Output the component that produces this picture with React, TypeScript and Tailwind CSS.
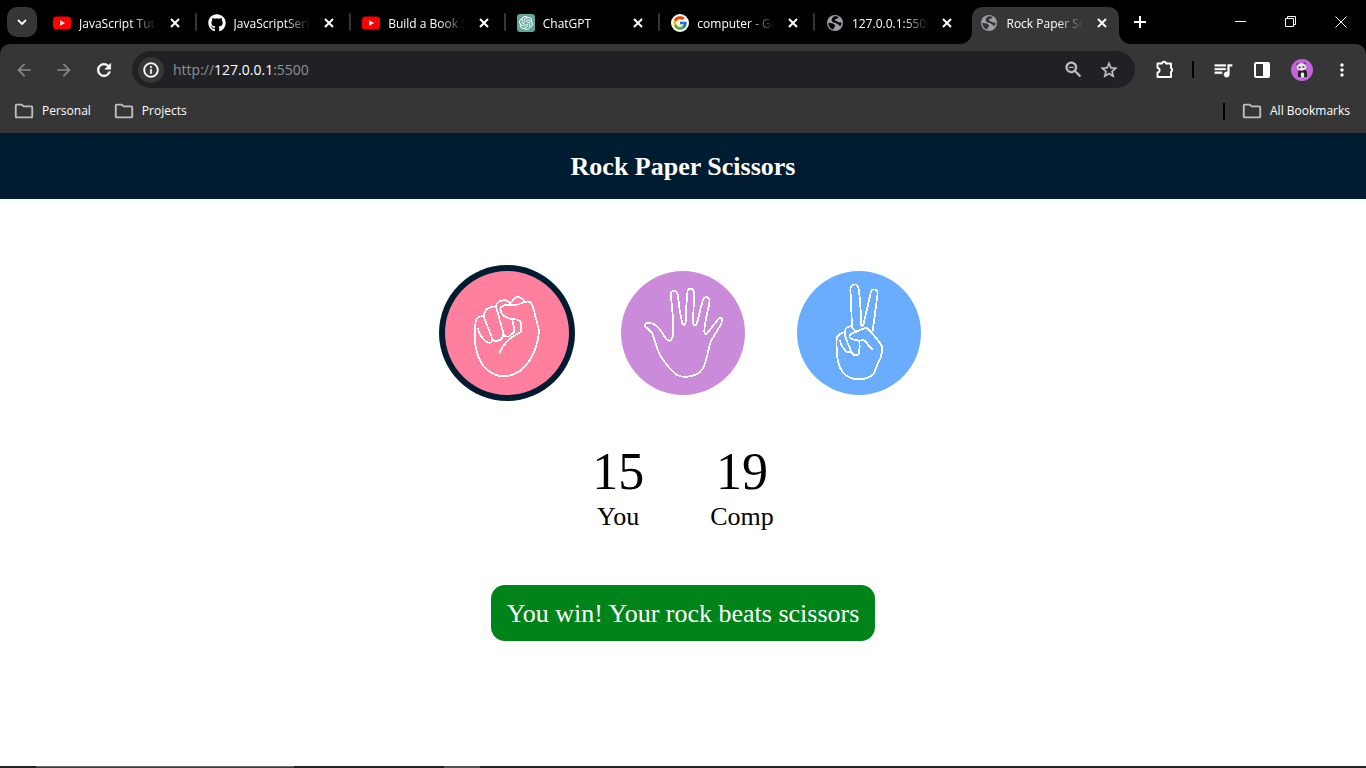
import type { ReactNode } from "react";
import { useState } from "react";
import { FaGithub } from "react-icons/fa";
import { FcGoogle } from "react-icons/fc";
import { SiOpenai } from "react-icons/si";
import {
  MdArrowBack,
  MdArrowForward,
  MdInfoOutline,
  MdMoreVert,
  MdOutlineFolder,
  MdQueueMusic,
  MdRefresh,
  MdStarBorder,
  MdZoomOut,
} from "react-icons/md";

function YouTubeIcon() {
  return (
    <svg viewBox="0 0 18 18" className="size-[18px]" aria-hidden="true">
      <rect x="0" y="2.5" width="18" height="13" rx="3.5" fill="#ff0000" />
      <path d="M7.2 6.2 12 9l-4.8 2.8z" fill="#fff" />
    </svg>
  );
}

function ChatIcon() {
  return (
    <span className="flex size-[18px] items-center justify-center rounded-[3px] bg-[#5fa899]">
      <SiOpenai className="size-[14px] text-white" />
    </span>
  );
}

function GoogleIcon() {
  return (
    <span className="flex size-[18px] items-center justify-center rounded-full bg-white">
      <FcGoogle className="size-4" />
    </span>
  );
}

function GlobeIcon({ sea }: { sea: string }) {
  return (
    <svg viewBox="0 0 18 18" className="size-[18px]" aria-hidden="true">
      <circle cx="9" cy="9" r="8" fill="#9aa0a6" />
      <path
        d="M8 2.400C10 2.200 11.800 2.600 12.600 3.300C12.200 4.600 10.800 4.600 9.600 5C8.200 5.600 9 6.800 10.400 6.900C11.400 7 11.600 8 12.600 8.300C13.800 8.600 15 8.400 15.700 8.800C15.500 10.200 15 11.400 14.200 12.300C13.200 12 13.400 10.800 12.200 10.400C11 10 10.400 9 8.800 8.800C7 8.600 5.400 7.400 5.600 5.800C5.700 4.400 6.600 3.200 8 2.400z"
        fill={sea}
      />
      <path
        d="M2.300 8.800C4.200 9.200 6.600 9 8 10.200C9.400 11 9.600 12.400 8.400 13C7.400 13.400 7.800 14.600 7.600 15.600C4.600 15 2.400 12.200 2.300 8.800z"
        fill={sea}
      />
    </svg>
  );
}

function CloseGlyph() {
  return (
    <svg viewBox="0 0 10 10" className="size-[10px]" aria-hidden="true">
      <path d="M1 1 9 9M9 1 1 9" stroke="currentColor" strokeWidth="2" />
    </svg>
  );
}

type TabInfo = { title: string; icon: ReactNode; active?: boolean; separator?: boolean };

const tabs: TabInfo[] = [
  { title: "JavaScript Tutorial", icon: <YouTubeIcon />, separator: true },
  {
    title: "JavaScriptSeries",
    icon: <FaGithub className="size-[18px] text-white" />,
    separator: true,
  },
  { title: "Build a Book Store", icon: <YouTubeIcon />, separator: true },
  { title: "ChatGPT", icon: <ChatIcon />, separator: true },
  { title: "computer - Google", icon: <GoogleIcon />, separator: true },
  { title: "127.0.0.1:5500", icon: <GlobeIcon sea="#000" /> },
  { title: "Rock Paper Scissors", icon: <GlobeIcon sea="#363636" />, active: true },
];

function Tab({ title, icon, active, separator }: TabInfo) {
  return (
    <div
      className={
        active
          ? "relative flex h-full min-w-0 flex-1 items-center rounded-t-[10px] bg-[#363636] pr-3 pb-[6px] pl-2"
          : "relative flex h-full min-w-0 flex-1 items-center pr-3 pb-[6px] pl-2"
      }
    >
      {active && (
        <>
          <svg viewBox="0 0 12 12" className="absolute bottom-0 -left-3 size-3" aria-hidden="true">
            <path d="M12 0v12H0A12 12 0 0 0 12 0z" fill="#363636" />
          </svg>
          <svg viewBox="0 0 12 12" className="absolute -right-3 bottom-0 size-3" aria-hidden="true">
            <path d="M0 0v12h12A12 12 0 0 1 0 0z" fill="#363636" />
          </svg>
        </>
      )}
      {separator && (
        <span className="absolute top-[6px] -right-[5px] h-[18px] w-[2px] rounded-full bg-[#363636]" />
      )}
      <span className="shrink-0">{icon}</span>
      <span className="ml-2 min-w-0 flex-1 overflow-hidden pt-[2px] whitespace-nowrap [mask-image:linear-gradient(to_right,#000_65%,transparent_98%)]">
        {title}
      </span>
      <button type="button" aria-label={"Close " + title} className="ml-3 shrink-0">
        <CloseGlyph />
      </button>
    </div>
  );
}

function TabStrip() {
  return (
    <div className="flex h-11 items-start bg-black pl-[7px] text-xs text-white">
      <button
        type="button"
        aria-label="Search tabs"
        className="mt-[7px] flex size-[30px] shrink-0 items-center justify-center rounded-[10px] bg-[#363636]"
      >
        <svg viewBox="0 0 10 6" className="h-[6px] w-[10px]" aria-hidden="true">
          <path d="M1 1l4 4 4-4" fill="none" stroke="#fff" strokeWidth="1.8" />
        </svg>
      </button>
      <div className="ml-2 flex h-11 max-w-[1074px] flex-1 gap-2 pt-[7px]">
        {tabs.map((tab) => (
          <Tab key={tab.title} {...tab} />
        ))}
      </div>
      <button type="button" aria-label="New tab" className="mt-4 ml-[15px] shrink-0">
        <svg viewBox="0 0 12 12" className="size-3" aria-hidden="true">
          <path d="M6 0v12M0 6h12" stroke="#fff" strokeWidth="2" />
        </svg>
      </button>
      <div className="mt-4 mr-[19px] ml-auto flex shrink-0 items-center gap-[38px]">
        <button type="button" aria-label="Minimize">
          <svg viewBox="0 0 12 12" className="size-3" aria-hidden="true">
            <path d="M0 5.5h11" stroke="#fff" />
          </svg>
        </button>
        <button type="button" aria-label="Restore">
          <svg viewBox="0 0 12 12" className="size-3" aria-hidden="true">
            <path d="M.5 2.5h8v8h-8zM2.500 2.500v-2h8v8h-2" fill="none" stroke="#fff" />
          </svg>
        </button>
        <button type="button" aria-label="Close window">
          <svg viewBox="0 0 12 12" className="size-3" aria-hidden="true">
            <path d="M.5.5l11 11M11.500.5l-11 11" stroke="#fff" />
          </svg>
        </button>
      </div>
    </div>
  );
}

function PandaAvatar() {
  return (
    <svg viewBox="0 0 22 22" className="size-[22px]" aria-hidden="true">
      <circle cx="11" cy="11" r="11" fill="#c563dd" />
      <path d="M7 18v-4c0-5 9-5 9 0v4z" fill="#222" />
      <ellipse cx="11.500" cy="16" rx="1.800" ry="2.800" fill="#eee" />
      <circle cx="6.800" cy="5.500" r="1.400" fill="#444" />
      <circle cx="13.500" cy="4.800" r="1.400" fill="#444" />
      <ellipse cx="10.500" cy="8" rx="4.800" ry="3.700" fill="#ececec" />
      <ellipse cx="8.600" cy="8.400" rx="1.200" ry=".9" fill="#333" />
      <ellipse cx="12.500" cy="7.800" rx="1.200" ry=".9" fill="#333" />
    </svg>
  );
}

function Toolbar() {
  return (
    <div className="flex h-[51px] items-center pl-[14px] text-white">
      <button type="button" aria-label="Back" className="text-[#8a8a8a]">
        <MdArrowBack className="size-5" />
      </button>
      <button type="button" aria-label="Forward" className="ml-5 text-[#8a8a8a]">
        <MdArrowForward className="size-5" />
      </button>
      <button type="button" aria-label="Reload" className="ml-5">
        <MdRefresh className="size-5 [&>path[fill=none]]:stroke-none" strokeWidth="0.7" />
      </button>
      <div className="ml-[18px] flex h-[37px] flex-1 items-center rounded-full bg-[#202124] pr-4 pl-[6px]">
        <span className="flex size-[26px] items-center justify-center rounded-full bg-[#363636]">
          <MdInfoOutline
            className="size-[18px] [&>path[fill=none]]:stroke-none"
            strokeWidth="0.5"
          />
        </span>
        <p className="ml-[9px] flex-1 text-sm text-[#8f9194]">
          http://<span className="text-white">127.0.0.1</span>:5500
        </p>
        <button type="button" aria-label="Zoom" className="text-[#c7c7c7]">
          <MdZoomOut className="size-[21px] [&>path[fill=none]]:stroke-none" strokeWidth="0.5" />
        </button>
        <button type="button" aria-label="Bookmark this tab" className="ml-[15px] text-[#c7c7c7]">
          <MdStarBorder className="size-5 [&>path[fill=none]]:stroke-none" strokeWidth="0.4" />
        </button>
      </div>
      <div className="mr-[14px] ml-5 flex items-center">
        <button type="button" aria-label="Extensions">
          <svg viewBox="0 0 20 20" className="size-5" aria-hidden="true">
            <path
              d="M2.500 3.500h4.500a2 1.800 0 0 1 4 0h5v4.700a1.700 1.900 0 0 1 0 3.600V17H2.500v-4.500c2.800-.6 2.800-4.100 0-4.700z"
              fill="none"
              stroke="currentColor"
              strokeWidth="1.900"
              strokeLinejoin="round"
            />
          </svg>
        </button>
        <span className="ml-[17px] h-[17px] w-[2px] bg-black" />
        <button type="button" aria-label="Media" className="ml-[18px]">
          <MdQueueMusic
            className="size-[22px] [&>path[fill=none]]:stroke-none"
            strokeWidth="0.4"
          />
        </button>
        <button type="button" aria-label="Side panel" className="ml-5">
          <svg viewBox="0 0 16 16" className="size-4" aria-hidden="true">
            <rect x="1" y="1" width="14" height="14" rx="1" fill="none" stroke="#fff" strokeWidth="2" />
            <path d="M9 1h6v14H9z" fill="#fff" />
          </svg>
        </button>
        <button type="button" aria-label="Profile" className="ml-[21px]">
          <PandaAvatar />
        </button>
        <button type="button" aria-label="Menu" className="ml-[19px]">
          <MdMoreVert className="size-5" />
        </button>
      </div>
    </div>
  );
}

function Bookmark({ label }: { label: string }) {
  return (
    <a href="#" className="flex items-center gap-[7px]">
      <MdOutlineFolder className="size-[22px] text-[#c0c0c0]" />
      {label}
    </a>
  );
}

function BookmarksBar() {
  return (
    <nav className="flex h-[38px] items-center gap-[22px] pr-4 pb-[6px] pl-[13px] text-xs font-medium text-white">
      <Bookmark label="Personal" />
      <Bookmark label="Projects" />
      <div className="ml-auto flex items-center gap-4">
        <span className="h-[17px] w-[2px] bg-black" />
        <Bookmark label="All Bookmarks" />
      </div>
    </nav>
  );
}

type Choice = { name: string; color: string; viewBox: string; paths: string[] };

const choices: Choice[] = [
  {
    name: "rock",
    color: "bg-[#ff7f9f]",
    viewBox: "33 33 372 372",
    paths: [
      "M150 168C140 168 126 172 125 182C124 200 120 220 123 246C126 275 134 300 150 320C168 340 192 349 212 349C240 348 268 330 288 300C305 273 312 245 315 215C314 200 306 180 302 160C299 145 296 132 288 126C280 123 268 126 256 132C242 137 225 136 210 136C197 140 196 150 205 162C212 173 228 178 250 179C258 180 261 186 262 196L261 215L236 230C222 240 205 255 196 281",
      "M131 204C134 215 141 230 151 240C158 248 168 250 173 246C176 242 175 237 174 233L152 178C148 163 152 150 164 144C174 138 184 138 187 143L207 216C209 226 205 238 197 240C188 244 178 243 175 238",
      "M187 143C184 130 194 122 208 121C220 119 228 127 233 137",
      "M207 218C209 228 216 231 225 229L240 217C243 212 237 190 235 178",
      "M231 129C238 118 246 108 254 110C264 112 268 122 276 126",
    ],
  },
  {
    name: "paper",
    color: "bg-[#ca8cda]",
    viewBox: "20 33 372 372",
    paths: [
      "M92 199C90 190 98 186 109 189C123 191 134 203 144 219C152 233 158 242 166 242C175 240 177 228 177 211C178 180 172 140 170 106C169 96 172 92 179 92C187 92 190 98 191 108C193 135 198 165 203 186C205 197 213 197 214 186C215 160 216 125 219 101C219 90 223 86 229 86C236 86 239 92 239 102C239 130 236 160 237 190C238 199 245 199 248 189C254 168 258 145 264 126C266 114 272 110 279 112C286 115 287 120 285 130C279 158 270 190 270 215C270 223 275 224 280 218L310 180C315 173 321 171 323 178C325 185 316 200 308 212C300 228 292 235 287 251C282 270 278 295 270 315C263 334 250 344 235 347C215 353 202 352 188 345C166 330 152 308 139 289C128 268 121 240 114 221C108 211 98 206 92 199Z",
    ],
  },
  {
    name: "scissors",
    color: "bg-[#6aadff]",
    viewBox: "21 33 372 372",
    paths: [
      "M187 205C183 170 185 125 181 92C181 80 186 73 195 73C203 74 206 82 207 94C211 125 213 160 213 197C218 200 221 193 222 185C228 158 236 130 241 102C243 91 248 87 255 89C262 90 264 96 262 106C258 140 253 175 248 213",
      "M185 199C175 198 166 204 164 216C160 219 149 217 142 230C137 240 140 260 141 280C142 305 150 325 158 337C172 354 190 358 208 358C226 357 240 353 250 342C258 328 262 309 272 292C276 281 277 270 277 261C272 250 260 236 249 223L231 203C218 205 206 212 190 219C180 222 176 227 180 233C187 239 198 241 208 242L219 240C228 242 232 252 238 260L249 269",
      "M164 216C164 230 169 240 174 251C180 264 183 277 190 284C196 288 205 287 207 279C209 266 210 255 208 243",
      "M149 241C154 255 161 267 168 274C174 279 181 278 184 274",
      "M185 199L190 207C194 213 200 216 206 213",
    ],
  },
];

function Game() {
  const [picked, setPicked] = useState("rock");
  return (
    <main className="flex flex-1 flex-col items-center bg-white font-['Liberation_Serif','Times_New_Roman',serif] text-black">
      <h1 className="flex h-[66px] w-full items-center justify-center bg-[#001c30] text-[26px] font-bold text-white">
        Rock Paper Scissors
      </h1>
      <div className="mt-[66px] flex gap-10">
        {choices.map((choice) => (
          <button
            key={choice.name}
            type="button"
            aria-label={choice.name}
            onClick={() => setPicked(choice.name)}
            className={
              picked === choice.name ? "rounded-full bg-[#001c30] p-[6px]" : "rounded-full p-[6px]"
            }
          >
            <span className={"block size-[124px] rounded-full " + choice.color}>
              <svg viewBox={choice.viewBox} className="size-full" aria-hidden="true">
                <g
                  fill="none"
                  stroke="#fff"
                  strokeWidth="5.400"
                  strokeLinejoin="round"
                  shapeRendering="crispEdges"
                >
                  {choice.paths.map((d) => (
                    <path key={d} d={d} />
                  ))}
                </g>
              </svg>
            </span>
          </button>
        ))}
      </div>
      <div className="mt-[42px] flex gap-[66px] text-center text-[26px] leading-[32px]">
        <div>
          <p className="text-[52px] leading-[58px]">15</p>
          <p>You</p>
        </div>
        <div>
          <p className="text-[52px] leading-[58px]">19</p>
          <p>Comp</p>
        </div>
      </div>
      <p className="mt-[52px] rounded-[14px] bg-[#008319] px-4 pt-[14px] pb-3 text-[26px] leading-[30px] text-white">
        You win! Your rock beats scissors
      </p>
    </main>
  );
}

function TaskbarEdge() {
  return (
    <div className="flex h-[2px] bg-[#202225]">
      <span className="ml-9 w-[258px] border-t border-[#6b6b6b] bg-[#3a3a3a]" />
      <span className="ml-[150px] w-9 bg-[#505153]" />
    </div>
  );
}

export default function App() {
  return (
    <div className="flex min-h-screen flex-col bg-black font-['Open_Sans','Noto_Sans',sans-serif]">
      <header>
        <TabStrip />
        <div className="rounded-t-[10px] bg-[#363636]">
          <Toolbar />
          <BookmarksBar />
        </div>
      </header>
      <Game />
      <TaskbarEdge />
    </div>
  );
}
